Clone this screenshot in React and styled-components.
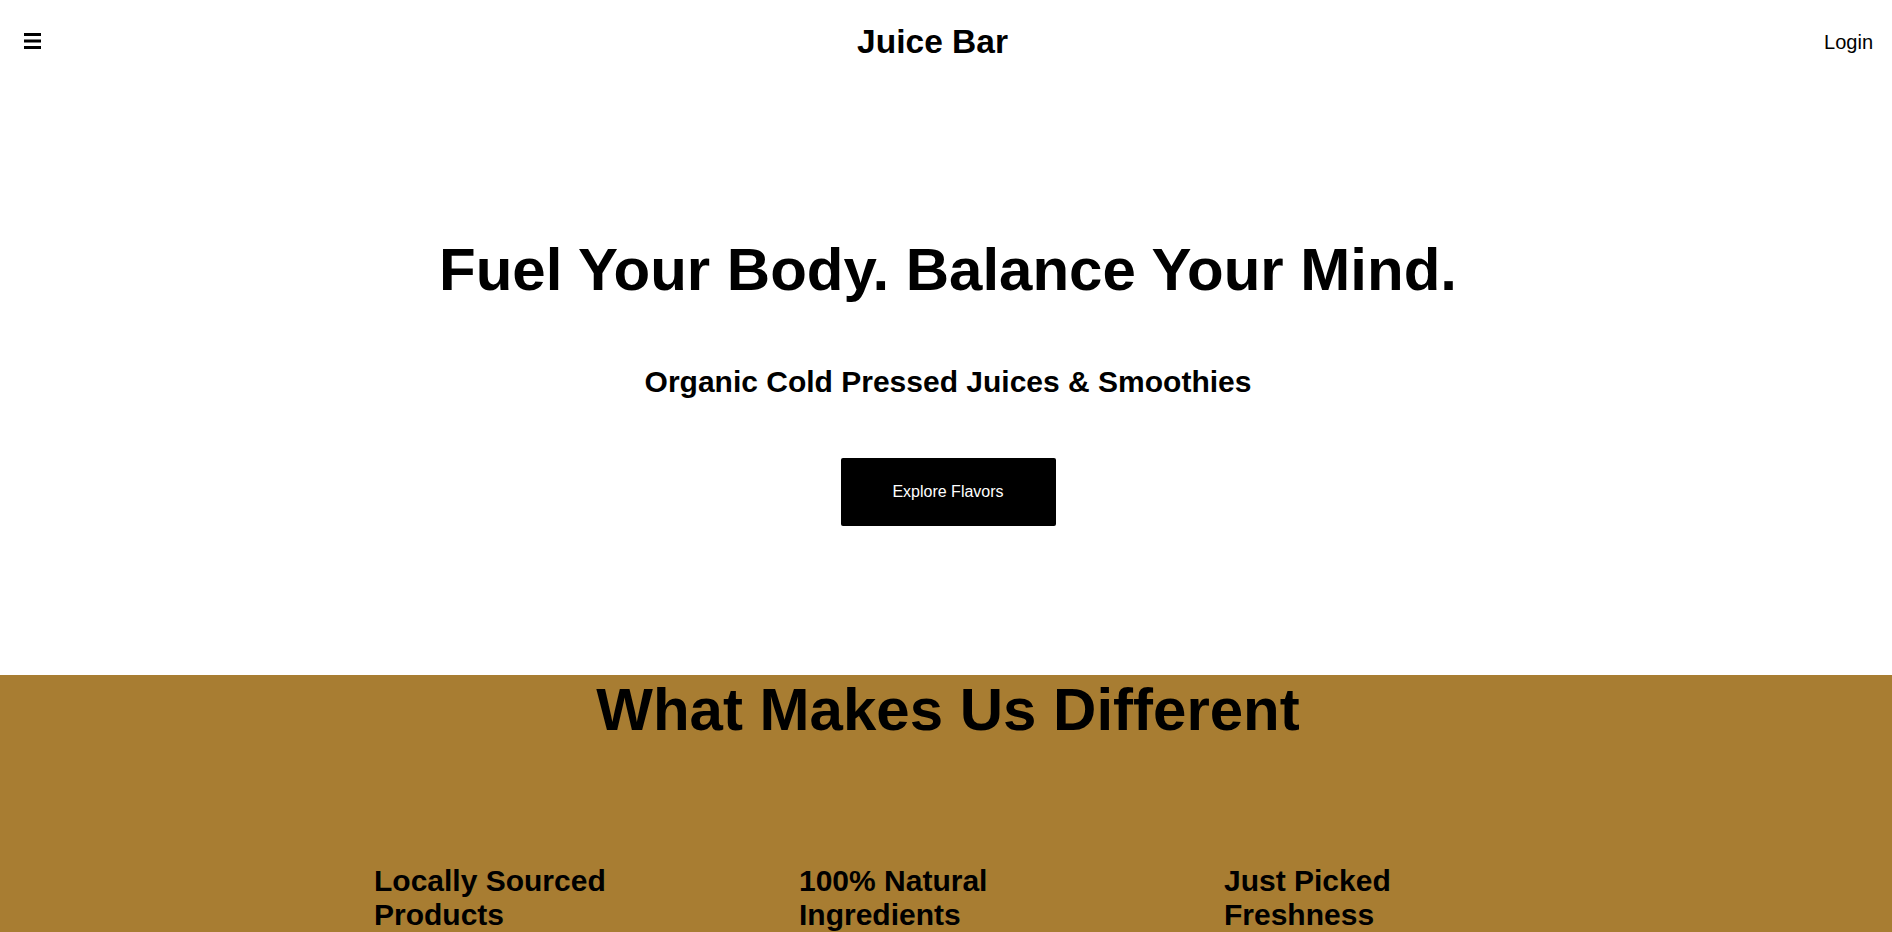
import React from "react";
import styled, { createGlobalStyle } from "styled-components";

const GlobalStyle = createGlobalStyle`
  html, body {
    margin: 0;
    padding: 0;
    background: #ffffff;
    color: #000000;
    font-family: "Liberation Sans", Arial, Helvetica, sans-serif;
  }
  * { box-sizing: border-box; }
`;

const Header = styled.header`
  height: 81px;
  display: flex;
  align-items: center;
  justify-content: space-between;
  padding: 0 19px 0 24px;
`;

const MenuButton = styled.button`
  display: flex;
  align-items: center;
  background: none;
  border: none;
  padding: 0;
  margin-top: 1px;
  cursor: pointer;
`;

const Brand = styled.h1`
  margin: 2px 0 0;
  font-size: 33.5px;
  font-weight: 700;
`;

const LoginLink = styled.a`
  margin-top: 3px;
  font-size: 20px;
  color: #000;
  text-decoration: none;
  cursor: pointer;
`;

const Hero = styled.section`
  display: flex;
  flex-direction: column;
  align-items: center;
  text-align: center;
  padding: 154px 0 149px 4px;
`;

const HeroTitle = styled.h2`
  margin: 0;
  font-size: 60px;
  font-weight: 700;
`;

const HeroSubtitle = styled.h3`
  margin: 61px 0 0;
  font-size: 30px;
  font-weight: 700;
`;

const CtaButton = styled.button`
  margin-top: 59px;
  width: 215px;
  height: 68px;
  background: #000;
  color: #fff;
  border: none;
  border-radius: 2px;
  font-family: "Liberation Sans", Arial, sans-serif;
  font-size: 16px;
  cursor: pointer;
`;

const Features = styled.section`
  background: #a87d32;
  padding: 0 0 60px 4px;
  display: flex;
  flex-direction: column;
  align-items: center;
`;

const FeaturesTitle = styled.h2`
  margin: 0;
  font-size: 60px;
  font-weight: 700;
  text-align: center;
`;

const FeatureGrid = styled.div`
  margin-top: 120px;
  display: grid;
  grid-template-columns: repeat(3, 298px);
  column-gap: 127px;
`;

const FeatureCard = styled.div`
  display: flex;
  flex-direction: column;
`;

const FeatureTitle = styled.h3`
  margin: 0;
  font-size: 30px;
  font-weight: 700;
`;

const features = [
  "Locally Sourced Products",
  "100% Natural Ingredients",
  "Just Picked Freshness",
];

const MenuIcon = () => (
  <svg width="17" height="16" viewBox="0 0 17 16" aria-hidden="true">
    <rect x="0" y="0" width="17" height="3" fill="#000" />
    <rect x="0" y="6.5" width="17" height="3" fill="#000" />
    <rect x="0" y="13" width="17" height="3" fill="#000" />
  </svg>
);

export default function App() {
  return (
    <>
      <GlobalStyle />
      <Header>
        <MenuButton aria-label="Menu">
          <MenuIcon />
        </MenuButton>
        <Brand>Juice Bar</Brand>
        <LoginLink>Login</LoginLink>
      </Header>
      <Hero>
        <HeroTitle>Fuel Your Body. Balance Your Mind.</HeroTitle>
        <HeroSubtitle>Organic Cold Pressed Juices &amp; Smoothies</HeroSubtitle>
        <CtaButton>Explore Flavors</CtaButton>
      </Hero>
      <Features>
        <FeaturesTitle>What Makes Us Different</FeaturesTitle>
        <FeatureGrid>
          {features.map((f) => (
            <FeatureCard key={f}>
              <FeatureTitle>{f}</FeatureTitle>
            </FeatureCard>
          ))}
        </FeatureGrid>
      </Features>
    </>
  );
}
